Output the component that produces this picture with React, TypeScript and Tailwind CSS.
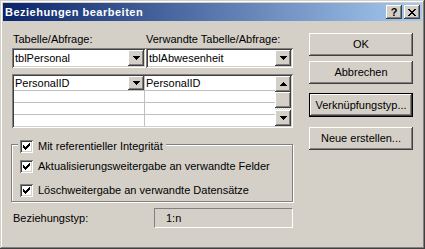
import React from "react";

const raised =
  "shadow-[inset_-1px_-1px_#404040,inset_1px_1px_#ffffff,inset_-2px_-2px_#808080,inset_2px_2px_#d4d0c8]";
const sunken =
  "shadow-[inset_1px_1px_#808080,inset_-1px_-1px_#ffffff,inset_2px_2px_#404040,inset_-2px_-2px_#d4d0c8]";

function DownArrow() {
  return (
    <svg width="7" height="4" viewBox="0 0 7 4" shapeRendering="crispEdges">
      <path d="M0 0h7v1H0z M1 1h5v1H1z M2 2h3v1H2z M3 3h1v1H3z" fill="#000" />
    </svg>
  );
}
function UpArrow() {
  return (
    <svg width="7" height="4" viewBox="0 0 7 4" shapeRendering="crispEdges">
      <path d="M3 0h1v1H3z M2 1h3v1H2z M1 2h5v1H1z M0 3h7v1H0z" fill="#000" />
    </svg>
  );
}

function DropBtn({ h = 16 }: { h?: number }) {
  return (
    <div
      className={`w-[16px] bg-[#d4d0c8] flex items-center justify-center ${raised}`}
      style={{ height: h }}
    >
      <DownArrow />
    </div>
  );
}

function Check() {
  return (
    <div className={`w-[13px] h-[13px] bg-white flex items-center justify-center shrink-0 ${sunken}`}>
      <svg width="7" height="7" viewBox="0 0 7 7" shapeRendering="crispEdges">
        <path
          d="M6 0h1v1H6z M5 1h2v1H5z M0 2h1v1H0z M4 2h3v1H4z M0 3h2v1H0z M3 3h3v1H3z M0 4h5v1H0z M1 5h3v1H1z M2 6h1v1H2z"
          fill="#000"
        />
      </svg>
    </div>
  );
}

function Btn({ label, def }: { label: string; def?: boolean }) {
  if (def) {
    return (
      <div className="h-[24px] w-[104px] border border-black">
        <div className={`h-full w-full flex items-center justify-center bg-[#d4d0c8] ${raised}`}>
          {label}
        </div>
      </div>
    );
  }
  return (
    <div className={`h-[23px] w-[104px] flex items-center justify-center bg-[#d4d0c8] ${raised}`}>
      {label}
    </div>
  );
}

export default function App() {
  return (
    <div
      className="w-[425px] h-[249px] bg-[#d4d0c8] p-[3px] flex flex-col text-[11px] leading-[13px] text-black shadow-[inset_-1px_-1px_#404040,inset_1px_1px_#d4d0c8,inset_-2px_-2px_#808080,inset_2px_2px_#ffffff]"
      style={{ fontFamily: '"Liberation Sans", Arial, sans-serif' }}
    >
      {/* title bar */}
      <div className="h-[18px] flex items-center pl-[2px] pr-[2px] bg-[linear-gradient(to_right,#0a246a,#a6caf0)]">
        <div className="text-white font-bold text-[11px] flex-1 tracking-[0.5px]">Beziehungen bearbeiten</div>
        <div className={`w-[16px] h-[14px] bg-[#d4d0c8] flex items-center justify-center font-bold ${raised}`}>
          ?
        </div>
        <div className={`ml-[2px] w-[16px] h-[14px] bg-[#d4d0c8] flex items-center justify-center ${raised}`}>
          <svg width="8" height="7" viewBox="0 0 8 7" shapeRendering="crispEdges">
            <path
              d="M0 0h2v1H0z M6 0h2v1H6z M1 1h2v1H1z M5 1h2v1H5z M2 2h4v1H2z M3 3h2v1H3z M2 4h4v1H2z M1 5h2v1H1z M5 5h2v1H5z M0 6h2v1H0z M6 6h2v1H6z"
              fill="#000"
            />
          </svg>
        </div>
      </div>

      {/* body */}
      <div className="flex flex-1 pl-[9px]">
        {/* left column */}
        <div className="w-[281px] flex flex-col pt-[12px]">
          <div className="flex h-[13px]">
            <div className="w-[134px] pl-[1px]">Tabelle/Abfrage:</div>
            <div className="pl-[0px]">Verwandte Tabelle/Abfrage:</div>
          </div>
          {/* combos */}
          <div className="flex mt-[2px] h-[20px]">
            <div className={`w-[134px] h-full bg-white flex items-center pl-[3px] pr-[2px] ${sunken}`}>
              <span className="flex-1">tblPersonal</span>
              <DropBtn />
            </div>
            <div className={`w-[147px] h-full bg-white flex items-center pl-[3px] pr-[2px] ${sunken}`}>
              <span className="flex-1">tblAbwesenheit</span>
              <DropBtn />
            </div>
          </div>
          {/* grid */}
          <div className={`mt-[6px] h-[54px] bg-white p-[2px] flex ${sunken}`}>
            <div className="flex-1 flex flex-col">
              <div className="h-[15px] flex border-b border-[#c0c0c0]">
                <div className="w-[131px] flex items-center pl-[1px] border-r border-[#c0c0c0]">
                  <span className="flex-1">PersonalID</span>
                  <DropBtn h={14} />
                </div>
                <div className="flex-1 flex items-center pl-[1px]">PersonalID</div>
              </div>
              {[0, 1].map((i) => (
                <div key={i} className="h-[12px] flex border-b border-[#c0c0c0]">
                  <div className="w-[131px] border-r border-[#c0c0c0]" />
                  <div className="flex-1" />
                </div>
              ))}
              <div className="flex-1 flex">
                <div className="w-[131px] border-r border-[#c0c0c0]" />
                <div className="flex-1" />
              </div>
            </div>
            {/* scrollbar */}
            <div className="w-[16px] flex flex-col">
              <div className={`h-[16px] bg-[#d4d0c8] flex items-center justify-center ${raised}`}>
                <UpArrow />
              </div>
              <div className={`h-[16px] bg-[#d4d0c8] ${raised}`} />
              <div className="flex-1 bg-[repeating-conic-gradient(#ffffff_0_25%,#d4d0c8_0_50%)] bg-[length:2px_2px]" />
              <div className={`h-[16px] bg-[#d4d0c8] flex items-center justify-center ${raised}`}>
                <DownArrow />
              </div>
            </div>
          </div>

          {/* group box */}
          <div className="relative mt-[16px] ml-[-1px] w-[282px] h-[58px] border border-[#808080] shadow-[inset_1px_1px_#ffffff,1px_1px_#ffffff] pt-[15px] pl-[8px] flex flex-col gap-[11px]">
            <div className="absolute left-[6px] top-[-5px] flex items-center gap-[5px] bg-[#d4d0c8] pl-[2px] pr-[3px]">
              <Check />
              <span>Mit referentieller Integrität</span>
            </div>
            <div className="flex items-center gap-[5px]">
              <Check />
              <span>Aktualisierungsweitergabe an verwandte Felder</span>
            </div>
            <div className="flex items-center gap-[5px]">
              <Check />
              <span>Löschweitergabe an verwandte Datensätze</span>
            </div>
          </div>

          {/* relationship type */}
          <div className="flex items-center mt-[6px] h-[20px]">
            <div className="w-[142px] pl-[1px]">Beziehungstyp:</div>
            <div className="flex-1 h-full flex items-center pl-[11px] border border-t-[#808080] border-l-[#808080] border-b-white border-r-white">
              1:n
            </div>
          </div>
        </div>

        {/* right column */}
        <div className="ml-[16px] pt-[12px] flex flex-col">
          <Btn label="OK" />
          <div className="mt-[5px]">
            <Btn label="Abbrechen" />
          </div>
          <div className="mt-[9px]">
            <Btn label="Verknüpfungstyp..." def />
          </div>
          <div className="mt-[10px]">
            <Btn label="Neue erstellen..." />
          </div>
        </div>
      </div>
    </div>
  );
}
